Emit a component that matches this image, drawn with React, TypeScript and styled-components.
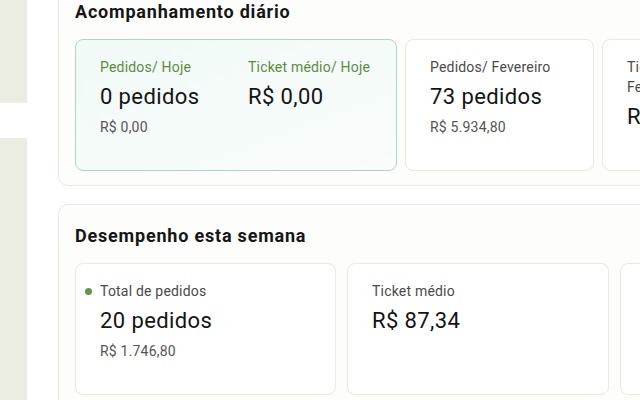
import React from "react";
import styled, { createGlobalStyle } from "styled-components";

const GlobalStyle = createGlobalStyle`
	html, body {
		margin: 0;
		padding: 0;
		background: #ffffff;
		overflow: hidden;
	}
	body {
		font-family: Roboto, "Liberation Sans", sans-serif;
		color: #1b1b1b;
	}
`;

const Page = styled.div`
	display: flex;
	width: 640px;
	height: 400px;
	overflow: hidden;
`;

const Sidebar = styled.aside`
	flex: 0 0 27px;
	display: flex;
	flex-direction: column;
	gap: 35px;
	margin-top: -20px;
`;

const SidePanel = styled.div<{ $height: number }>`
	flex: 0 0 ${(p) => p.$height}px;
	background: #ecede2;
`;

const Main = styled.main`
	flex: 1;
	min-width: 0;
	padding-left: 31px;
	display: flex;
	flex-direction: column;
	gap: 18px;
	/* page is scrolled a bit */
	margin-top: -20px;
`;

const Section = styled.section`
	width: 700px;
	box-sizing: border-box;
	background: #fdfdfc;
	border: 1px solid #e8e8e6;
	border-radius: 10px;
	padding: 19px 16px 14px;
`;

const Title = styled.h2`
	margin: 0 0 15px;
	font-size: 18px;
	line-height: 24px;
	font-weight: 700;
	letter-spacing: 0.8px;
	color: #161616;
`;

const Row = styled.div<{ $gap: number }>`
	display: flex;
	gap: ${(p) => p.$gap}px;
`;

const Card = styled.div<{ $width: number; $active?: boolean }>`
	flex: 0 0 ${(p) => p.$width}px;
	height: 132px;
	box-sizing: border-box;
	padding: 17px 24px 0;
	border-radius: 8px;
	border: 1px solid ${(p) => (p.$active ? "#acd8c8" : "#e9e9e7")};
	background: ${(p) =>
		p.$active ? "linear-gradient(160deg, #f1faf7 0%, #f8fcfa 100%)" : "#ffffff"};
	display: flex;
	gap: 24px;
`;

const Metric = styled.div<{ $width?: number }>`
	display: flex;
	flex-direction: column;
	width: ${(p) => (p.$width ? `${p.$width}px` : "auto")};
`;

const Label = styled.div<{ $green?: boolean; $dot?: boolean }>`
	position: relative;
	font-size: 14px;
	line-height: 20px;
	letter-spacing: 0.2px;
	color: ${(p) => (p.$green ? "#5b8c3f" : "#4a4a4a")};

	${(p) =>
		p.$dot &&
		`
		&::before {
			content: "";
			position: absolute;
			left: -15px;
			top: 7px;
			width: 7px;
			height: 7px;
			border-radius: 50%;
			background: #5c9a47;
		}
	`}
`;

const Value = styled.div`
	margin-top: 6px;
	font-size: 22px;
	line-height: 28px;
	font-weight: 400;
	letter-spacing: 0.4px;
	color: #141414;
`;

const Sub = styled.div`
	margin-top: 7px;
	font-size: 14px;
	line-height: 18px;
	letter-spacing: 0.2px;
	color: #555555;
`;

export default function App() {
	return (
		<>
			<GlobalStyle />
			<Page>
				<Sidebar>
					<SidePanel $height={123} />
					<SidePanel $height={300} />
				</Sidebar>
				<Main>
					<Section>
						<Title>Acompanhamento diário</Title>
						<Row $gap={8}>
							<Card $width={322} $active>
								<Metric $width={124}>
									<Label $green>Pedidos/ Hoje</Label>
									<Value>0 pedidos</Value>
									<Sub>R$ 0,00</Sub>
								</Metric>
								<Metric>
									<Label $green>Ticket médio/ Hoje</Label>
									<Value>R$ 0,00</Value>
								</Metric>
							</Card>
							<Card $width={189}>
								<Metric>
									<Label>Pedidos/ Fevereiro</Label>
									<Value>73 pedidos</Value>
									<Sub>R$ 5.934,80</Sub>
								</Metric>
							</Card>
							<Card $width={189}>
								<Metric $width={110}>
									<Label>Ticket médio/ Fevereiro</Label>
									<Value>R$ 81,30</Value>
								</Metric>
							</Card>
						</Row>
					</Section>
					<Section>
						<Title>Desempenho esta semana</Title>
						<Row $gap={11}>
							<Card $width={261}>
								<Metric>
									<Label $dot>Total de pedidos</Label>
									<Value>20 pedidos</Value>
									<Sub>R$ 1.746,80</Sub>
								</Metric>
							</Card>
							<Card $width={262}>
								<Metric>
									<Label>Ticket médio</Label>
									<Value>R$ 87,34</Value>
								</Metric>
							</Card>
							<Card $width={262}>
								<Metric>
									<Label>Clientes</Label>
									<Value>18 clientes</Value>
								</Metric>
							</Card>
						</Row>
					</Section>
				</Main>
			</Page>
		</>
	);
}
